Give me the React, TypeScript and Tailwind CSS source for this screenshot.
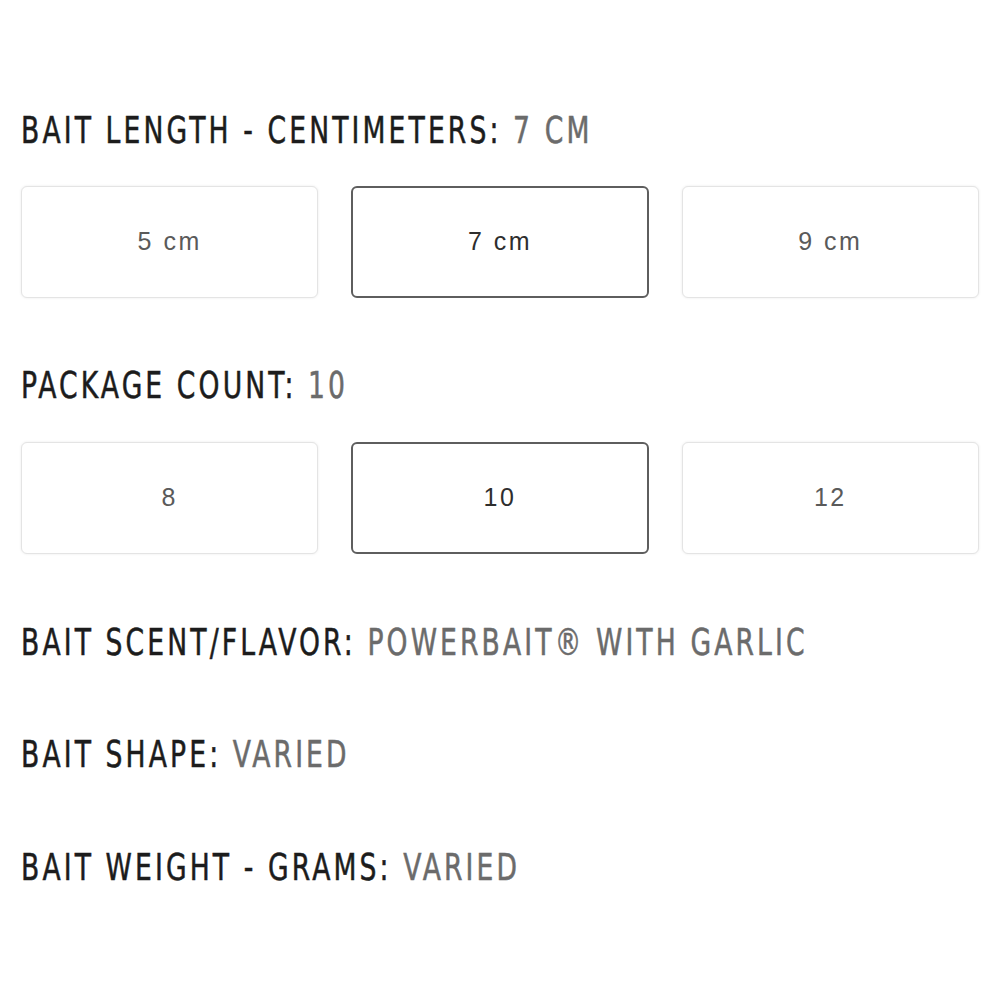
import React from "react";

const headFont = {
  fontFamily: '"DejaVu Sans Condensed", "DejaVu Sans", sans-serif',
};

type Option = { label: string; selected?: boolean };

const OptionRow = ({ options }: { options: Option[] }) => (
  <div className="grid grid-cols-3 gap-[33px]">
    {options.map((opt) => (
      <div
        key={opt.label}
        className={
          opt.selected
            ? "flex h-[112px] items-center justify-center rounded-[6px] border-2 border-[#5e5e5e] bg-white text-[25px] tracking-[2.5px] text-[#2e2e2e]"
            : "flex h-[112px] items-center justify-center rounded-[6px] border border-[#e4e4e4] bg-white text-[25px] tracking-[2.5px] text-[#5a5a5a] shadow-[0_0_3px_rgba(0,0,0,0.08)]"
        }
        style={{ fontFamily: '"Liberation Sans", Arial, sans-serif' }}
      >
        {opt.label}
      </div>
    ))}
  </div>
);

const Spec = ({ label, value, className = "" }: { label: string; value: string; className?: string }) => (
  <div className={`-mr-[21px] h-[40px] ${className}`}>
    <h3
      className="inline-block w-max origin-left scale-x-[0.8] whitespace-nowrap text-[37px] leading-[40px] font-normal tracking-[0.105em] text-[#1c1c1c] [-webkit-text-stroke:0.5px_#1c1c1c]"
      style={headFont}
    >
      {label}: <span className="text-[#6b6b6b] [-webkit-text-stroke:0.5px_#6b6b6b]">{value}</span>
    </h3>
  </div>
);

export default function App() {
  return (
    <div className="min-h-[1000px] w-[1000px] bg-white px-[21px] pt-[111px]">
      <Spec label="BAIT LENGTH - CENTIMETERS" value="7 CM" />
      <div className="mt-[35px]">
        <OptionRow options={[{ label: "5 cm" }, { label: "7 cm", selected: true }, { label: "9 cm" }]} />
      </div>

      <Spec label="PACKAGE COUNT" value="10" className="mt-[68px]" />
      <div className="mt-[36px]">
        <OptionRow options={[{ label: "8" }, { label: "10", selected: true }, { label: "12" }]} />
      </div>

      <Spec label="BAIT SCENT/FLAVOR" value="POWERBAIT® WITH GARLIC" className="mt-[69px]" />
      <Spec label="BAIT SHAPE" value="VARIED" className="mt-[72px]" />
      <Spec label="BAIT WEIGHT - GRAMS" value="VARIED" className="mt-[73px]" />
    </div>
  );
}
